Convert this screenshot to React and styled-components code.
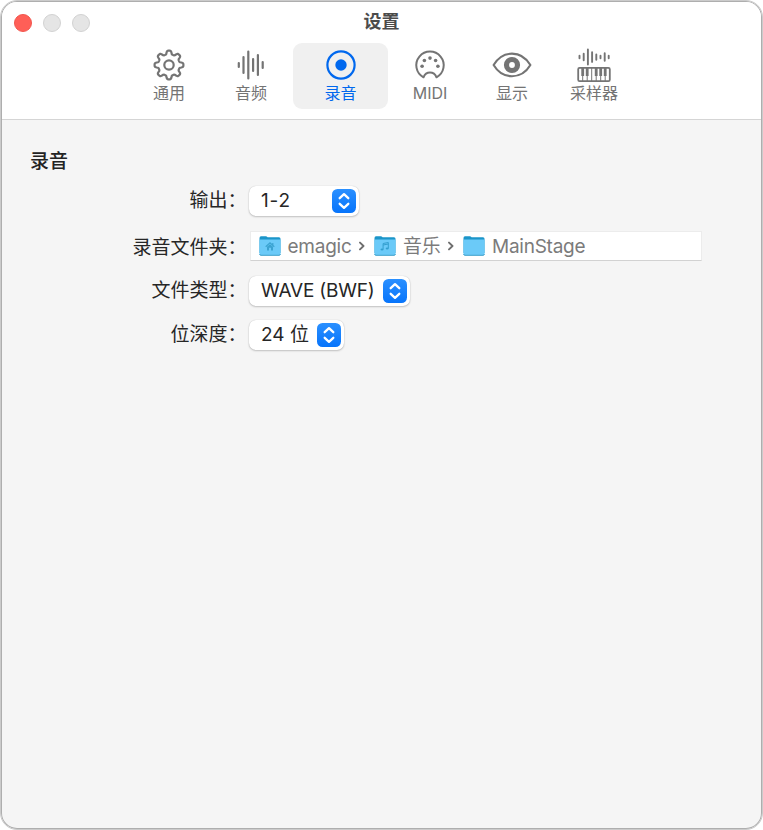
import React from 'react'
import styled, { createGlobalStyle } from 'styled-components'

const GlobalStyle = createGlobalStyle`
    *{
        box-sizing: border-box;
        margin: 0;
        padding: 0;
    }
    body{
        background: #ffffff;
        font-family: Inter, "Noto Sans CJK SC", sans-serif;
        overflow: hidden;
    }
`;

const GearIcon = () => {
    const points = []
    const steps = 128
    for (let i = 0; i < steps; i++) {
        const a = (i / steps) * Math.PI * 2
        const wave = Math.tanh(2.2 * Math.cos(a * 8)) / Math.tanh(2.2)
        const r = 12.6 + 1.8 * wave
        points.push(`${(16 + r * Math.sin(a)).toFixed(2)},${(16 - r * Math.cos(a)).toFixed(2)}`)
    }
    return (
        <svg width="32" height="32" viewBox="0 0 32 32" fill="none" stroke="currentColor" strokeWidth="2.2" strokeLinejoin="round">
            <polygon points={points.join(' ')} />
            <circle cx="16" cy="16" r="4.7" />
        </svg>
    )
}

const AudioIcon = () => (
    <svg width="28" height="32" viewBox="0 0 28 32" stroke="currentColor" strokeWidth="2.2" strokeLinecap="round">
        <path d="M1.8 14v4M6.5 8v16M11.3 2.5v27M16.1 10v12M20.9 6v20M25.7 13v6" />
    </svg>
)

const RecordIcon = () => (
    <svg width="32" height="32" viewBox="0 0 32 32" fill="none">
        <circle cx="16" cy="16" r="13.6" stroke="currentColor" strokeWidth="2.2" />
        <circle cx="16" cy="16" r="5.7" fill="currentColor" />
    </svg>
)

const MidiIcon = () => (
    <svg width="32" height="32" viewBox="0 0 32 32" fill="none">
        <path
            d="M9.5 28.3A13.7 13.7 0 1 1 22.5 28.3C21.3 25.3 19 23.6 16 23.6S10.7 25.3 9.5 28.3Z"
            stroke="currentColor"
            strokeWidth="2"
            strokeLinejoin="round"
        />
        <g fill="currentColor">
            <circle cx="8.1" cy="17.2" r="1.8" />
            <circle cx="10.4" cy="11.5" r="1.8" />
            <circle cx="16" cy="9.1" r="1.8" />
            <circle cx="21.6" cy="11.5" r="1.8" />
            <circle cx="23.9" cy="17.2" r="1.8" />
        </g>
    </svg>
)

const EyeIcon = () => (
    <svg width="40" height="32" viewBox="0 0 40 32" fill="none" stroke="currentColor">
        <path d="M1.6 16C5.8 9 12.4 4.6 20 4.6S34.2 9 38.4 16C34.2 23 27.6 27.2 20 27.2S5.8 23 1.6 16Z" strokeWidth="2.1" strokeLinejoin="round" />
        <circle cx="20" cy="16" r="5.5" strokeWidth="5.2" />
    </svg>
)

const SamplerIcon = () => (
    <svg width="34" height="36" viewBox="0 0 34 36" fill="none" stroke="currentColor">
        <path d="M2.5 8.8v2.4M6.7 6.8v6.4M10.9 2.5v15M15.1 5.3v9.6M19.3 7.5v5.2M23.5 8.8v2.4M27.7 6.3v7.4M31.7 8.8v2.4" strokeWidth="1.9" strokeLinecap="round" />
        <rect x="1.2" y="20.8" width="31.6" height="13.4" rx="1.4" strokeWidth="1.8" />
        <path d="M5.7 21v13M10.2 21v13M14.7 21v13M19.2 21v13M23.7 21v13M28.2 21v13" strokeWidth="1" />
        <path d="M5.7 21v8M10.2 21v8M19.2 21v8M23.7 21v8M28.2 21v8" strokeWidth="2.8" />
    </svg>
)

const FolderIcon = ({ kind }) => (
    <svg width="22" height="22" viewBox="0 0 22 22" fill="none">
        <path d="M0.5 3Q0.5 1.2 2 1.2H6.8Q7.8 1.2 8.6 2.2H20Q21.5 2.2 21.5 3.8V18H0.5Z" fill="#1b95c9" />
        <path d="M0.5 4.6H21.5V19Q21.5 20.3 20.2 20.3H1.8Q0.5 20.3 0.5 19Z" fill="#6bcaf8" />
        <path d="M0.6 19.1Q0.8 20.3 1.8 20.3H20.2Q21.2 20.3 21.4 19.1" stroke="#3d9fca" />
        {kind === 'home' && (
            <g>
                <path d="M6.7 11.8L11 7.9L15.3 11.8M13.8 8V10" stroke="#3ba3d1" strokeWidth="1.2" />
                <path d="M8 11.8L11 9.2L14 11.8V15.4H12V12.8H10V15.4H8Z" fill="#3ba3d1" />
            </g>
        )}
        {kind === 'music' && (
            <g>
                <path d="M9.1 14.4V8.5L14.3 7.5V13.4M9.1 10L14.3 9" stroke="#339fcf" strokeWidth="1" />
                <ellipse cx="8" cy="14.5" rx="1.5" ry="1.1" fill="#339fcf" />
                <ellipse cx="13.2" cy="13.5" rx="1.5" ry="1.1" fill="#339fcf" />
            </g>
        )}
    </svg>
)

const tabs = [
    { id: 1, title: '通用', icon: <GearIcon /> },
    { id: 2, title: '音频', icon: <AudioIcon /> },
    { id: 3, title: '录音', icon: <RecordIcon /> },
    { id: 4, title: 'MIDI', icon: <MidiIcon /> },
    { id: 5, title: '显示', icon: <EyeIcon /> },
    { id: 6, title: '采样器', icon: <SamplerIcon /> },
]

const folders = [
    { id: 1, title: 'emagic', kind: 'home' },
    { id: 2, title: '音乐', kind: 'music' },
    { id: 3, title: 'MainStage', kind: 'plain' },
]

function PopUp({ value, width, spacing }) {
    return (
        <PopUpStyled $width={width} $spacing={spacing}>
            <span>{value}</span>
            <ArrowBox>
                <svg width="24" height="24" viewBox="0 0 24 24" fill="none" stroke="#ffffff" strokeWidth="2.3" strokeLinecap="round" strokeLinejoin="round">
                    <path d="M7.7 9.2L12 5.2L16.3 9.2M7.7 14.8L12 18.8L16.3 14.8" />
                </svg>
            </ArrowBox>
        </PopUpStyled>
    )
}

function App() {
    const [active, setActive] = React.useState(3)

    return (
        <WindowStyled>
            <GlobalStyle />
            <Header>
                <TitleBar>
                    <Lights>
                        <Light $color="#ff5f57" $border="#f2564e" />
                        <Light $color="#e5e5e5" $border="#d2d2d2" />
                        <Light $color="#e5e5e5" $border="#d2d2d2" />
                    </Lights>
                    <h1>设置</h1>
                </TitleBar>
                <Toolbar>
                    {tabs.map((item) => {
                        return <Tab
                            key={item.id}
                            $active={active === item.id}
                            onClick={() => setActive(item.id)}
                        >
                            <TabIcon>{item.icon}</TabIcon>
                            <span>{item.title}</span>
                        </Tab>
                    })}
                </Toolbar>
            </Header>
            <Content>
                <h2>录音</h2>
                <Form>
                    <Row $gap="15px">
                        <Label>输出：</Label>
                        <PopUp value="1-2" width="110px" spacing="0.8px" />
                    </Row>
                    <Row $gap="15px">
                        <Label $drop="3px">录音文件夹：</Label>
                        <PathBar>
                            {folders.map((item, i) => (
                                <React.Fragment key={item.id}>
                                    {i > 0 && (
                                        <Chevron width="6" height="10" viewBox="0 0 6 10">
                                            <path d="M1 1.6L4.5 5L1 8.4" />
                                        </Chevron>
                                    )}
                                    <PathItem>
                                        <FolderIcon kind={item.kind} />
                                        <span>{item.title}</span>
                                    </PathItem>
                                </React.Fragment>
                            ))}
                        </PathBar>
                    </Row>
                    <Row $gap="14px">
                        <Label>文件类型：</Label>
                        <PopUp value="WAVE (BWF)" width="161px" spacing="-0.2px" />
                    </Row>
                    <Row>
                        <Label>位深度：</Label>
                        <PopUp value="24 位" width="95px" />
                    </Row>
                </Form>
            </Content>
        </WindowStyled>
    )
}

const WindowStyled = styled.div`
    width: 763px;
    height: 830px;
    display: flex;
    flex-direction: column;
    background: #f5f5f5;
    border: 1px solid #cbcbcb;
    box-shadow: inset 0 0 0 1px #aeaeae;
    border-radius: 17px;
    padding: 1px;
`;

const Header = styled.header`
    height: 118px;
    flex-shrink: 0;
    background: #ffffff;
    border-bottom: 1px solid #d5d5d5;
    border-radius: 15px 15px 0 0;
`;

const TitleBar = styled.div`
    height: 41px;
    display: grid;
    grid-template-columns: 1fr auto 1fr;
    align-items: center;
    h1{
        font-size: 18px;
        line-height: 26px;
        font-weight: 700;
        color: #4b4b4b;
        padding-bottom: 2px;
    }
`;

const Lights = styled.div`
    display: flex;
    gap: 11px;
    padding-left: 11.5px;
`;

const Light = styled.span`
    width: 18px;
    height: 18px;
    border-radius: 50%;
    background: ${({ $color }) => $color};
    border: 1px solid ${({ $border }) => $border};
`;

const Toolbar = styled.nav`
    display: flex;
    padding-left: 126px;
`;

const Tab = styled.button`
    width: ${({ $active }) => ($active ? '95px' : '82px')};
    height: 66px;
    margin: ${({ $active }) => ($active ? '0 1px' : '0')};
    display: flex;
    flex-direction: column;
    align-items: center;
    border: none;
    border-radius: 9px;
    background: ${({ $active }) => ($active ? '#f0f0f0' : 'transparent')};
    color: ${({ $active }) => ($active ? '#0068ee' : '#747474')};
    font-family: inherit;
    font-size: 16px;
    line-height: 20px;
`;

const TabIcon = styled.span`
    height: 40px;
    padding-top: 4px;
    display: flex;
    align-items: center;
    justify-content: center;
`;

const Content = styled.main`
    padding: 28px 28px 0;
    h2{
        font-size: 19px;
        line-height: 28px;
        font-weight: 500;
        color: #222222;
    }
`;

const Form = styled.div`
    padding-top: 10px;
`;

const Row = styled.div`
    display: flex;
    align-items: center;
    height: 30px;
    margin-bottom: ${({ $gap }) => $gap || '0'};
`;

const Label = styled.label`
    width: 216.5px;
    margin-right: 2.5px;
    padding-top: ${({ $drop }) => $drop || '0'};
    flex-shrink: 0;
    text-align: right;
    font-size: 19px;
    line-height: 28px;
    color: #262626;
`;

const PopUpStyled = styled.div`
    width: ${({ $width }) => $width};
    height: 30px;
    display: flex;
    align-items: center;
    justify-content: space-between;
    padding: 0 3px 0 12px;
    background: #ffffff;
    border-radius: 7px;
    box-shadow: 0 0 1px rgba(0, 0, 0, 0.22), 0 1px 2px rgba(0, 0, 0, 0.2);
    font-size: 19px;
    line-height: 24px;
    letter-spacing: ${({ $spacing }) => $spacing || '0'};
    color: #262626;
    white-space: nowrap;
    > span:first-child{
        height: 24px;
    }
`;

const ArrowBox = styled.span`
    width: 24px;
    height: 24px;
    flex-shrink: 0;
    border-radius: 5.5px;
    background: linear-gradient(#2b90ff, #0774fb);
    svg{
        display: block;
    }
`;

const PathBar = styled.div`
    width: 452px;
    height: 30px;
    margin-left: 1px;
    display: flex;
    align-items: center;
    padding-left: 7.5px;
    background: #ffffff;
    border: 1px solid #ececec;
    border-bottom-color: #d2d2d2;
    font-size: 19px;
    letter-spacing: -0.25px;
    line-height: 24px;
    color: #7b7b7b;
`;

const PathItem = styled.div`
    display: flex;
    align-items: center;
    gap: 7px;
    span{
        height: 22px;
    }
`;

const Chevron = styled.svg`
    margin: 0 9.5px 0 7px;
    fill: none;
    stroke: #6e6e6e;
    stroke-width: 1.9;
    stroke-linecap: round;
    stroke-linejoin: round;
`;

export default App
